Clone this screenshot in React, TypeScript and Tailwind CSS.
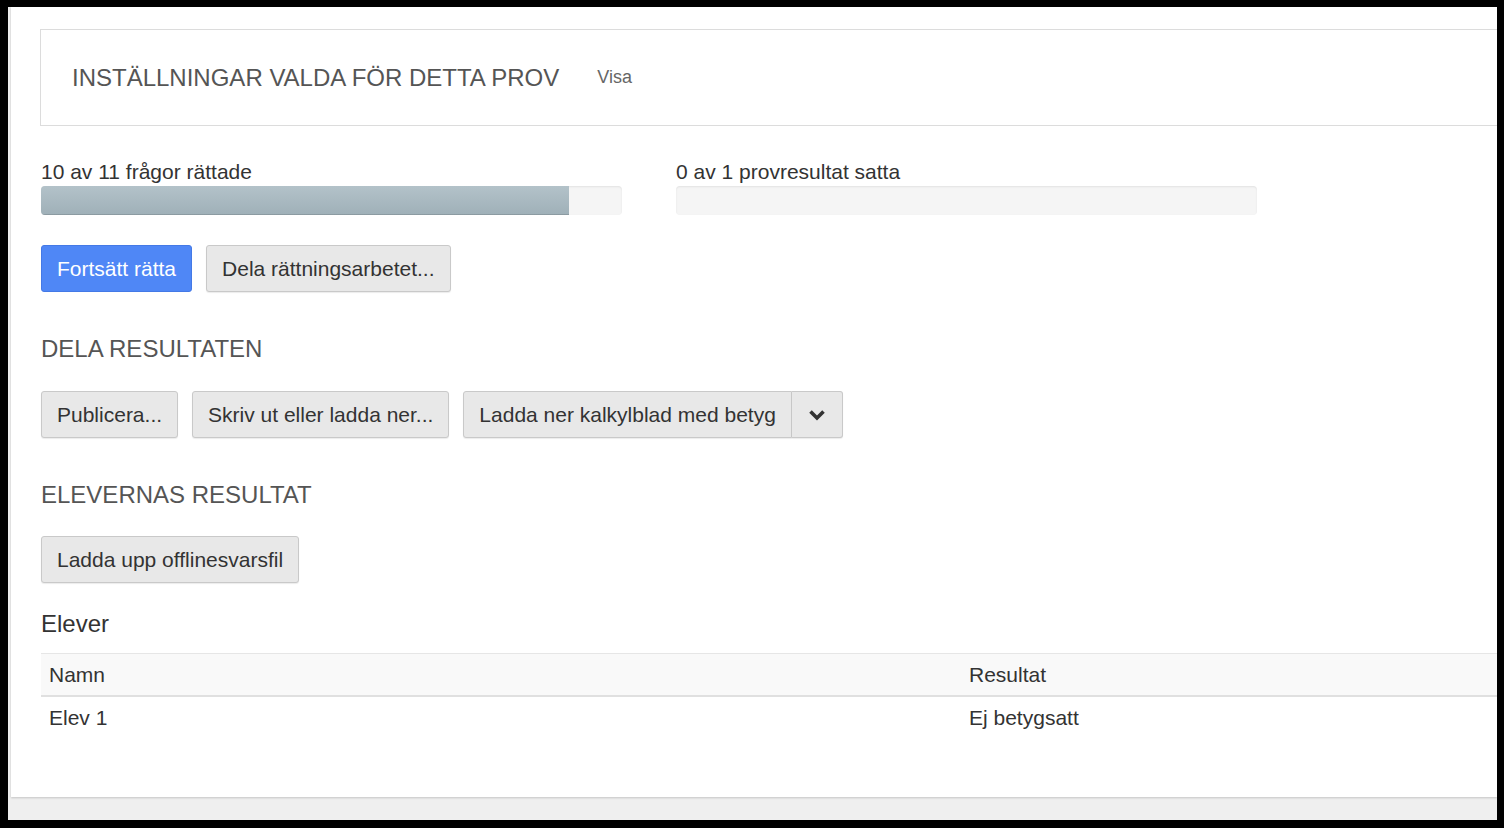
import React from "react";

const font = { fontFamily: '"Liberation Sans", Arial, sans-serif' };

function GrayButton({ children, className = "" }: { children: React.ReactNode; className?: string }) {
  return (
    <button
      className={`h-[47px] px-[15px] flex items-center bg-[#e8e8e8] border border-[#c9c9c9] rounded-[3px] text-[21px] text-[#333] shadow-[0_1px_1px_rgba(0,0,0,0.08)] ${className}`}
    >
      {children}
    </button>
  );
}

function Progress({ label, pct }: { label: string; pct: number }) {
  return (
    <div className="w-[581px] flex flex-col">
      <div className="text-[21px] leading-[28px] text-[#333]">{label}</div>
      <div className="h-[29px] rounded-[4px] bg-[#f5f5f5] shadow-[inset_0_1px_2px_rgba(0,0,0,0.08)] overflow-hidden">
        <div
          className="h-full bg-gradient-to-b from-[#b3c2c9] to-[#9fb0b8] shadow-[inset_0_-1px_0_rgba(0,0,0,0.12)]"
          style={{ width: `${pct}%` }}
        />
      </div>
    </div>
  );
}

export default function App() {
  return (
    <div className="w-[1504px] h-[828px] bg-black pt-[7px] pl-[8px] pr-[7px] pb-[8px]" style={font}>
      <div className="w-full h-full bg-[#efefef] flex flex-col overflow-hidden">
        <div className="h-[790px] ml-[3px] bg-white overflow-hidden shadow-[0_1px_2px_rgba(0,0,0,0.18)] pl-[29px] pt-[22px] relative">
          {/* Settings box */}
          <div className="w-[1500px] h-[97px] border border-[#dcdcdc] flex items-center pl-[31px]">
            <span className="text-[24px] text-[#555]">INSTÄLLNINGAR VALDA FÖR DETTA PROV</span>
            <span className="ml-[38px] text-[18px] text-[#666]">Visa</span>
          </div>

          {/* Progress */}
          <div className="flex gap-[54px] mt-[32px] pl-[1px]">
            <Progress label="10 av 11 frågor rättade" pct={(10 / 11) * 100} />
            <Progress label="0 av 1 provresultat satta" pct={0} />
          </div>

          <div className="flex gap-[14px] mt-[30px] pl-[1px]">
            <button className="h-[47px] px-[15px] flex items-center bg-[#4f87f6] border border-[#4479e6] rounded-[3px] text-[21px] text-white">
              Fortsätt rätta
            </button>
            <GrayButton>Dela rättningsarbetet...</GrayButton>
          </div>

          <h3 className="mt-[42px] pl-[1px] text-[24px] leading-[30px] text-[#555]">DELA RESULTATEN</h3>

          <div className="flex gap-[14px] mt-[27px] pl-[1px]">
            <GrayButton>Publicera...</GrayButton>
            <GrayButton>Skriv ut eller ladda ner...</GrayButton>
            <div className="flex">
              <GrayButton className="rounded-r-none">Ladda ner kalkylblad med betyg</GrayButton>
              <GrayButton className="rounded-l-none border-l-0 w-[51px] justify-center !px-0">
                <svg width="18" height="18" viewBox="0 0 18 18" fill="none">
                  <path d="M2.5 5.5 L9 12 L15.5 5.5" stroke="#333" strokeWidth="3.6" strokeLinecap="butt" strokeLinejoin="miter" />
                </svg>
              </GrayButton>
            </div>
          </div>

          <h3 className="mt-[42px] pl-[1px] text-[24px] leading-[30px] text-[#555]">ELEVERNAS RESULTAT</h3>

          <div className="flex mt-[26px] pl-[1px]">
            <GrayButton>Ladda upp offlinesvarsfil</GrayButton>
          </div>

          <h4 className="mt-[26px] pl-[1px] text-[24px] leading-[30px] text-[#333]">Elever</h4>

          <table className="mt-[14px] ml-[1px] w-[1480px] border-collapse text-[21px] text-[#333]">
            <thead>
              <tr className="bg-[#f9f9f9] border-t border-[#e6e6e6] border-b-2 border-b-[#e0e0e0]">
                <th className="w-[920px] h-[42px] px-[8px] text-left font-normal">Namn</th>
                <th className="h-[42px] px-[8px] text-left font-normal">Resultat</th>
              </tr>
            </thead>
            <tbody>
              <tr>
                <td className="h-[43px] px-[8px]">Elev 1</td>
                <td className="h-[43px] px-[8px]">Ej betygsatt</td>
              </tr>
            </tbody>
          </table>
        </div>
      </div>
    </div>
  );
}
